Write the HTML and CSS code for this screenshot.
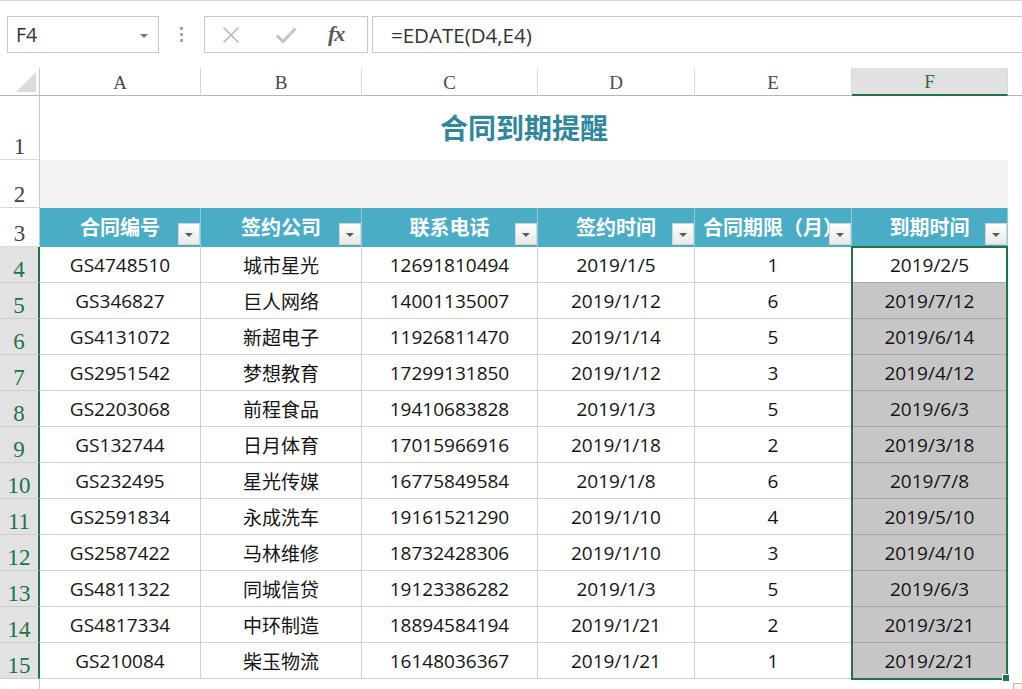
FILE: index.html
```html
<!DOCTYPE html>
<html lang="zh-CN">
<head>
<meta charset="utf-8">
<title>合同到期提醒</title>
<link rel="stylesheet" href="styles.css">
</head>
<body>
<div class="toolbar">
  <div class="namebox"><span class="ref">F4</span><span class="caret"></span></div>
  <div class="grip"><i></i><i></i><i></i></div>
  <div class="fxbox">
    <svg class="ico-x" width="18" height="18" viewBox="0 0 18 18"><path d="M1.5 1.5 L16.5 16.5 M16.5 1.5 L1.5 16.5" stroke="#b9b9b9" stroke-width="1.6" fill="none"/></svg>
    <svg class="ico-ok" width="22" height="18" viewBox="0 0 22 18"><path d="M2 9.5 L8 15.5 L20.5 2.5" stroke="#c3c3c3" stroke-width="3" fill="none"/></svg>
    <span class="fx">fx</span>
  </div>
  <div class="formula">=EDATE(D4,E4)</div>
</div>

<div class="sheet">
  <div class="corner"><span class="tri"></span></div>
  <div class="ch">A</div><div class="ch">B</div><div class="ch">C</div><div class="ch">D</div><div class="ch">E</div><div class="ch ch-sel">F</div><div class="ch ch-g"></div>

  <div class="rh">1</div><div class="title">合同到期提醒</div><div class="g"></div>
  <div class="rh">2</div><div class="band"></div><div class="g"></div>

  <div class="rh">3</div>
  <div class="th">合同编号<span class="flt"></span></div>
  <div class="th">签约公司<span class="flt"></span></div>
  <div class="th">联系电话<span class="flt"></span></div>
  <div class="th">签约时间<span class="flt"></span></div>
  <div class="th">合同期限（月）<span class="flt"></span></div>
  <div class="th">到期时间<span class="flt"></span></div>
  <div class="g"></div>

  <div class="rh sel">4</div><div class="td">GS4748510</div><div class="td">城市星光</div><div class="td">12691810494</div><div class="td">2019/1/5</div><div class="td">1</div><div class="td f active">2019/2/5</div><div class="g"></div>
  <div class="rh sel">5</div><div class="td">GS346827</div><div class="td">巨人网络</div><div class="td">14001135007</div><div class="td">2019/1/12</div><div class="td">6</div><div class="td f">2019/7/12</div><div class="g"></div>
  <div class="rh sel">6</div><div class="td">GS4131072</div><div class="td">新超电子</div><div class="td">11926811470</div><div class="td">2019/1/14</div><div class="td">5</div><div class="td f">2019/6/14</div><div class="g"></div>
  <div class="rh sel">7</div><div class="td">GS2951542</div><div class="td">梦想教育</div><div class="td">17299131850</div><div class="td">2019/1/12</div><div class="td">3</div><div class="td f">2019/4/12</div><div class="g"></div>
  <div class="rh sel">8</div><div class="td">GS2203068</div><div class="td">前程食品</div><div class="td">19410683828</div><div class="td">2019/1/3</div><div class="td">5</div><div class="td f">2019/6/3</div><div class="g"></div>
  <div class="rh sel">9</div><div class="td">GS132744</div><div class="td">日月体育</div><div class="td">17015966916</div><div class="td">2019/1/18</div><div class="td">2</div><div class="td f">2019/3/18</div><div class="g"></div>
  <div class="rh sel">10</div><div class="td">GS232495</div><div class="td">星光传媒</div><div class="td">16775849584</div><div class="td">2019/1/8</div><div class="td">6</div><div class="td f">2019/7/8</div><div class="g"></div>
  <div class="rh sel">11</div><div class="td">GS2591834</div><div class="td">永成洗车</div><div class="td">19161521290</div><div class="td">2019/1/10</div><div class="td">4</div><div class="td f">2019/5/10</div><div class="g"></div>
  <div class="rh sel">12</div><div class="td">GS2587422</div><div class="td">马林维修</div><div class="td">18732428306</div><div class="td">2019/1/10</div><div class="td">3</div><div class="td f">2019/4/10</div><div class="g"></div>
  <div class="rh sel">13</div><div class="td">GS4811322</div><div class="td">同城信贷</div><div class="td">19123386282</div><div class="td">2019/1/3</div><div class="td">5</div><div class="td f">2019/6/3</div><div class="g"></div>
  <div class="rh sel">14</div><div class="td">GS4817334</div><div class="td">中环制造</div><div class="td">18894584194</div><div class="td">2019/1/21</div><div class="td">2</div><div class="td f">2019/3/21</div><div class="g"></div>
  <div class="rh sel">15</div><div class="td">GS210084</div><div class="td">柴玉物流</div><div class="td">16148036367</div><div class="td">2019/1/21</div><div class="td">1</div><div class="td f">2019/2/21</div><div class="g"></div>

  <div class="rh rh-last"></div>

  <div class="selection"></div>
  <div class="handle"></div>
  <div class="quick"></div>
</div>
</body>
</html>
```

FILE: styles.css
```css
html, body {
  margin: 0;
  padding: 0;
  background: #ffffff;
}
body {
  width: 1022px;
  height: 689px;
  overflow: hidden;
  font-family: "Open Sans", "Noto Sans CJK SC", sans-serif;
  color: #1f1f1f;
}

/* ---------- formula toolbar ---------- */
.toolbar {
  height: 68px;
  box-sizing: border-box;
  border-top: 1px solid #d6d6d6;
  padding: 15px 0 0 7px;
  display: flex;
  align-items: flex-start;
}
.namebox {
  width: 152px;
  height: 37px;
  box-sizing: border-box;
  border: 1px solid #c6c6c6;
  display: flex;
  align-items: center;
  justify-content: space-between;
  padding: 0 10px 0 8px;
  font-size: 19.5px;
  color: #333;
}
.caret {
  width: 0;
  height: 0;
  border-left: 4px solid transparent;
  border-right: 4px solid transparent;
  border-top: 4px solid #7a7a7a;
  margin-top: 2px;
}
.grip {
  width: 45px;
  height: 37px;
  display: flex;
  flex-direction: column;
  align-items: center;
  justify-content: center;
  gap: 3px;
}
.grip i {
  display: block;
  width: 3px;
  height: 3px;
  background: #a8a8a8;
}
.fxbox {
  width: 164px;
  height: 37px;
  box-sizing: border-box;
  border: 1px solid #c6c6c6;
  display: flex;
  align-items: center;
  padding-left: 17px;
}
.ico-x { margin-right: 35px; }
.ico-ok { margin-right: 31px; }
.fx {
  font-family: "Liberation Serif", "DejaVu Serif", serif;
  font-style: italic;
  font-weight: bold;
  font-size: 22px;
  color: #5a5a5a;
  letter-spacing: -1px;
  margin-top: -2px;
}
.formula {
  flex: 1;
  margin-left: 4px;
  height: 37px;
  box-sizing: border-box;
  border: 1px solid #c6c6c6;
  border-right: none;
  display: flex;
  align-items: center;
  padding-left: 18px;
  font-size: 20.5px;
  color: #333;
}

/* ---------- sheet grid ---------- */
.sheet {
  position: relative;
  display: grid;
  grid-template-columns: 40px 161px 161px 176px 157px 157px 156px 1fr;
  grid-template-rows: 28px 64px 48px 39px repeat(12, 36px) 1fr;
  height: 621px;
}
.corner {
  position: relative;
  border-right: 1px solid #c8c8c8;
  border-bottom: 1px solid #b5b5b5;
}
.tri {
  position: absolute;
  left: 16px;
  top: 4px;
  width: 0;
  height: 0;
  border-left: 20px solid transparent;
  border-bottom: 20px solid #dcdcdc;
}
.ch {
  border-right: 1px solid #d8d8d8;
  border-bottom: 1px solid #b5b5b5;
  display: flex;
  align-items: center;
  justify-content: center;
  font-family: "Liberation Serif", "DejaVu Serif", serif;
  font-size: 19px;
  color: #4a4a4a;
  padding-top: 2px;
  box-sizing: border-box;
}
.ch-sel {
  background: #e1e1e1;
  color: #2f6b48;
  border-bottom: 2px solid #217346;
}
.ch-g {
  border-right: none;
}

.rh {
  border-right: 1px solid #c8c8c8;
  border-bottom: 1px solid #dadada;
  display: flex;
  align-items: flex-end;
  justify-content: center;
  padding-bottom: 1px;
  box-sizing: border-box;
  font-family: "Liberation Serif", "DejaVu Serif", serif;
  font-size: 23px;
  line-height: 1;
  color: #454545;
}
.rh.sel {
  background: #e2e2e2;
  color: #217346;
  border-right: 2px solid #217346;
  border-bottom: 1px solid #cdcdcd;
}
.rh-last {
  border-bottom: none;
}

.title {
  grid-column: span 6;
  display: flex;
  align-items: center;
  justify-content: center;
  padding-bottom: 2px;
  font-family: "Noto Sans CJK SC", sans-serif;
  font-weight: 700;
  font-size: 28px;
  color: #31869b;
}
.band {
  grid-column: span 6;
  background: #f2f2f2;
}
.g {
  background: #ffffff;
}

.th {
  position: relative;
  overflow: hidden;
  white-space: nowrap;
  background: #4bacc6;
  border-right: 1px solid #8fcbdc;
  display: flex;
  align-items: center;
  justify-content: center;
  padding-bottom: 3px;
  font-family: "Noto Sans CJK SC", sans-serif;
  font-weight: 700;
  font-size: 20px;
  color: #ffffff;
  box-sizing: border-box;
}
.flt {
  position: absolute;
  right: 0;
  bottom: 2px;
  width: 22px;
  height: 22px;
  box-sizing: border-box;
  border: 1px solid #d4d4d4;
  background: linear-gradient(#ffffff, #e8e8e8);
}
.flt::after {
  content: "";
  position: absolute;
  left: 6px;
  top: 9px;
  border-left: 4px solid transparent;
  border-right: 4px solid transparent;
  border-top: 4px solid #5c5c5c;
}

.td {
  display: flex;
  align-items: center;
  justify-content: center;
  border-right: 1px solid #d0d0d0;
  border-bottom: 1px solid #d0d0d0;
  box-sizing: border-box;
  font-size: 19px;
  color: #141414;
  white-space: nowrap;
}
.td.f {
  background: #c6c6c6;
  border-bottom-color: #a9a9a9;
}
.td.f.active {
  background: #ffffff;
}

/* ---------- overlays ---------- */
.selection {
  position: absolute;
  left: 851px;
  top: 178px;
  width: 157px;
  height: 434px;
  box-sizing: border-box;
  border: 2px solid #217346;
  pointer-events: none;
}
.handle {
  position: absolute;
  left: 1002px;
  top: 606px;
  width: 8px;
  height: 8px;
  box-sizing: border-box;
  background: #217346;
  border: 1px solid #ffffff;
}
.quick {
  position: absolute;
  left: 1013px;
  top: 615px;
  width: 14px;
  height: 14px;
  box-sizing: border-box;
  border: 1px solid #b8b8b8;
  background: #fbf3ea;
}
```
